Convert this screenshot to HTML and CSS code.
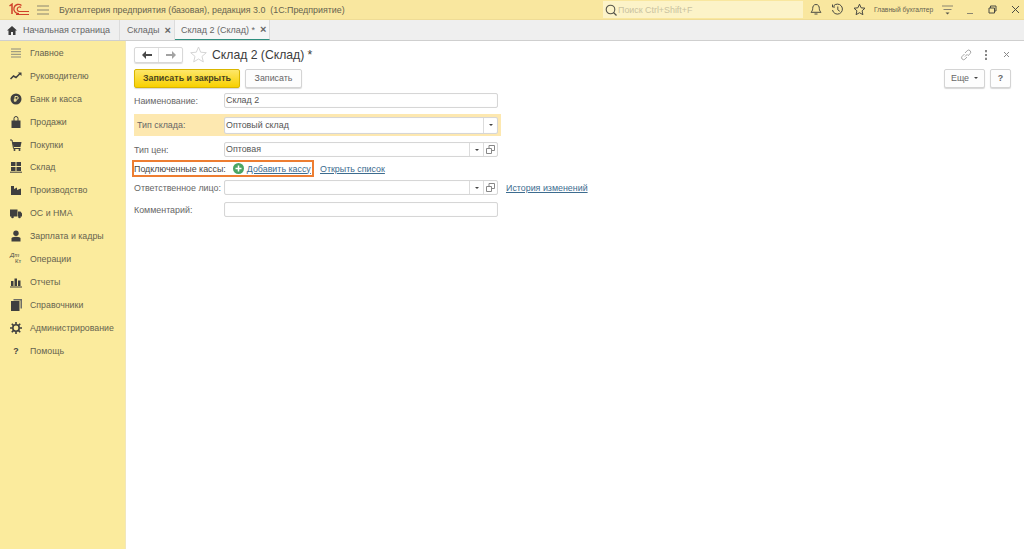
FILE: index.html
```html
<!DOCTYPE html>
<html lang="ru">
<head>
<meta charset="utf-8">
<title>Склад 2 (Склад) *</title>
<link rel="stylesheet" href="styles.css">
</head>
<body>
<header class="topbar">
  <svg class="logo" width="20" height="13" viewBox="0 0 20 13"><path d="M.5 3L3 1.200V11" fill="none" stroke="#d0402a" stroke-width="1.500"/><path d="M12.500 2.500A4.600 4.600 0 1 0 10 10.500" fill="none" stroke="#d0402a" stroke-width="1.300"/><path d="M12 4.500a2.300 2.300 0 1 0-2 4h10M7 11.500h13" fill="none" stroke="#d0402a" stroke-width="1.200"/></svg>
  <svg class="burger" width="12" height="10" viewBox="0 0 12 10"><path d="M0 1h12M0 5h12M0 9h12" stroke="#8a8570" stroke-width="1"/></svg>
  <div class="apptitle">Бухгалтерия предприятия (базовая), редакция 3.0&nbsp; (1С:Предприятие)</div>
  <div class="search">
    <svg width="12" height="12" viewBox="0 0 12 12"><circle cx="5.500" cy="5.500" r="4.300" fill="none" stroke="#55544a" stroke-width="1.100"/><path d="M8.500 8.500l3 3" stroke="#55544a" stroke-width="1.200"/></svg>
    <span>Поиск Ctrl+Shift+F</span>
  </div>
  <div class="tools">
    <svg width="12" height="13" viewBox="0 0 12 13"><path d="M6 1.500c2.500 0 3.300 2 3.300 4 0 2 1 3 1.700 3.800H1c.7-.8 1.700-1.800 1.700-3.800s.8-4 3.300-4zM4.500 11h3" fill="none" stroke="#4a4a42" stroke-width="1"/></svg>
    <svg width="13" height="13" viewBox="0 0 13 13"><path d="M2.500 3A5 5 0 1 1 1.500 7M1.500 1.500V4h2.500M6.800 3.500v3.300l2 1.500" fill="none" stroke="#4a4a42" stroke-width="1"/></svg>
    <svg width="13" height="13" viewBox="0 0 13 13"><path d="M6.500 1.200l1.600 3.600 3.900.4-2.900 2.600.8 3.900-3.400-2-3.400 2 .8-3.900L1 5.200l3.900-.4z" fill="none" stroke="#4a4a42" stroke-width="1"/></svg>
    <span class="user">Главный бухгалтер</span>
    <svg width="11" height="10" viewBox="0 0 11 10"><path d="M0 1h11M1.500 4.500h8" stroke="#8a8570"/><path d="M3.500 7.500h4l-2 2z" fill="#55544a"/></svg>
    <svg class="win-min" width="7" height="10" viewBox="0 0 7 10"><path d="M0 8.500h6" stroke="#8a8570"/></svg>
    <svg class="win-max" width="9" height="9" viewBox="0 0 9 9"><path d="M1 3h5.500v5H1zM2.500 3V1H8v5H6.500" fill="none" stroke="#4a4a42"/></svg>
    <svg class="win-close" width="9" height="9" viewBox="0 0 9 9"><path d="M1 1l7 7M8 1l-7 7" stroke="#4a4a42"/></svg>
  </div>
</header>

<nav class="tabs">
  <div class="tab tab-home">
    <svg width="10" height="9" viewBox="0 0 10 9"><path d="M5 0L0 4.500h1.500V9h2.500V6h2v3h2.500V4.500H10z" fill="#3d3d3d"/></svg>
    <span>Начальная страница</span>
  </div>
  <div class="tab tab-list"><span>Склады</span><span class="tab-x">×</span></div>
  <div class="tab tab-active"><span>Склад 2 (Склад) *</span><span class="tab-x">×</span></div>
</nav>

<div class="main">
  <aside class="sidebar">
    <div class="navitem"><svg width="12" height="12" viewBox="0 0 12 12"><path d="M1 2h10M1 4.700h10M1 7.300h10M1 10h10" stroke="#8b8b7c" stroke-width="1"/></svg><span>Главное</span></div>
    <div class="navitem"><svg width="12" height="12" viewBox="0 0 12 12"><path d="M.5 9l3-3 2.500 1.500 4-4" fill="none" stroke="#3f3f3f" stroke-width="1.500"/><path d="M8 2.500h3.500V6z" fill="#3f3f3f"/></svg><span>Руководителю</span></div>
    <div class="navitem"><svg width="12" height="12" viewBox="0 0 12 12"><circle cx="6" cy="6" r="5.500" fill="#3f3f3f"/><path d="M5 9V3.500h1.800a1.400 1.400 0 0 1 0 2.800H3.800M3.800 7.700h3" fill="none" stroke="#fbec9e" stroke-width="1"/></svg><span>Банк и касса</span></div>
    <div class="navitem"><svg width="12" height="12" viewBox="0 0 12 12"><path d="M1.500 4.500h9V12h-9z" fill="#3f3f3f"/><path d="M4 5V2.500a2 2 0 0 1 4 0V5" fill="none" stroke="#3f3f3f"/></svg><span>Продажи</span></div>
    <div class="navitem"><svg width="12" height="12" viewBox="0 0 12 12"><path d="M2.500 3h9L10.500 8H3.500z" fill="#3f3f3f"/><path d="M0 1h2l1.500 8.500h7" fill="none" stroke="#3f3f3f"/><circle cx="4.500" cy="11" r="1" fill="#3f3f3f"/><circle cx="9.500" cy="11" r="1" fill="#3f3f3f"/></svg><span>Покупки</span></div>
    <div class="navitem"><svg width="12" height="12" viewBox="0 0 12 12"><path d="M1 1h4.500v4H1zM6.500 1H11v4H6.500zM1 6h4.500v4H1zM6.500 6H11v4H6.500z" fill="#3f3f3f"/><path d="M0 11.200h12" stroke="#3f3f3f"/></svg><span>Склад</span></div>
    <div class="navitem"><svg width="12" height="12" viewBox="0 0 12 12"><path d="M1 11V2h3v3l3-1.500V6l4-1.500V11z" fill="#3f3f3f"/></svg><span>Производство</span></div>
    <div class="navitem"><svg width="12" height="12" viewBox="0 0 12 12"><path d="M0 2.500h7.500V9.500H0zM8 4.500h2.500L12 6.500v3H8z" fill="#3f3f3f"/><circle cx="2.500" cy="10" r="1.300" fill="#3f3f3f"/><circle cx="9.500" cy="10" r="1.300" fill="#3f3f3f"/></svg><span>ОС и НМА</span></div>
    <div class="navitem"><svg width="12" height="12" viewBox="0 0 12 12"><circle cx="6" cy="3.200" r="2.700" fill="#3f3f3f"/><path d="M1.500 11.500V8.500c0-1 1.500-1.700 4.500-1.700s4.500.7 4.500 1.700v3z" fill="#3f3f3f"/></svg><span>Зарплата и кадры</span></div>
    <div class="navitem"><span class="dtkt"><i>Дт</i><b>Кт</b></span><span>Операции</span></div>
    <div class="navitem"><svg width="12" height="12" viewBox="0 0 12 12"><path d="M1 5h2.500v5H1zM4.500 2.500H7V10H4.500zM8 4.500h2.500V10H8zM0 11h12" fill="#3f3f3f"/><path d="M0 11h12" stroke="#3f3f3f"/></svg><span>Отчеты</span></div>
    <div class="navitem"><svg width="12" height="12" viewBox="0 0 12 12"><path d="M3.500 0H12v9.500h-1.500V1.500h-7z" fill="#6d6d66"/><path d="M1 2h8.500v10H1z" fill="#3f3f3f"/></svg><span>Справочники</span></div>
    <div class="navitem"><svg width="12" height="12" viewBox="0 0 12 12"><circle cx="6" cy="6" r="3.200" fill="none" stroke="#3f3f3f" stroke-width="1.600"/><path d="M6 0v2.500M6 9.500V12M0 6h2.500M9.500 6H12M1.800 1.800l1.800 1.800M8.400 8.400l1.800 1.800M1.800 10.200l1.800-1.800M8.400 3.600l1.800-1.800" stroke="#3f3f3f" stroke-width="1.600"/></svg><span>Администрирование</span></div>
    <div class="navitem"><span class="qmark">?</span><span>Помощь</span></div>
  </aside>

  <main class="content">
    <div class="form-head">
      <div class="navpair">
        <span class="np"><svg width="10" height="8" viewBox="0 0 10 8"><path d="M4 0v3h6v2H4v3L0 4z" fill="#4a4a4a"/></svg></span>
        <span class="np np-off"><svg width="10" height="8" viewBox="0 0 10 8"><path d="M6 0v3H0v2h6v3l4-4z" fill="#a3a3a3"/></svg></span>
      </div>
      <svg class="fav" width="17" height="17" viewBox="0 0 17 17"><path d="M8.500 1l2.200 5.200 5.600.5-4.300 3.700 1.300 5.500-4.800-2.900-4.800 2.900 1.300-5.500L.7 6.700l5.600-.5z" fill="none" stroke="#d5d5d5" stroke-width="1"/></svg>
      <h1 class="form-title">Склад 2 (Склад) *</h1>
      <div class="head-tools">
        <svg class="ht-link" width="12" height="12" viewBox="0 0 12 12"><path d="M5 7.500l2.500-2.500M4.500 5L2 7.500a2 2 0 0 0 2.800 2.800L7 8M5 4l2.200-2.300a2 2 0 0 1 2.900 2.900L7.800 7" fill="none" stroke="#9a9a9a" stroke-width=".9"/></svg>
        <svg width="4" height="10" viewBox="0 0 4 10"><path d="M2 0v2.200M2 3.900v2.200M2 7.800V10" stroke="#6a6a6a" stroke-width="1.600"/></svg>
        <svg width="7" height="7" viewBox="0 0 7 7"><path d="M1 1l5 5M6 1L1 6" stroke="#8a8a8a"/></svg>
      </div>
    </div>

    <div class="cmdbar">
      <button class="btn btn-primary">Записать и закрыть</button>
      <button class="btn btn-plain">Записать</button>
      <div class="cmd-right">
        <button class="btn btn-more">Еще <span class="caret"></span></button>
        <button class="btn btn-help">?</button>
      </div>
    </div>

    <div class="form">
      <div class="row row-name">
        <label class="lbl">Наименование:</label>
        <div class="field"><span class="val">Склад 2</span></div>
      </div>
      <div class="row row-hl">
        <label class="lbl">Тип склада:</label>
        <div class="field field-hl"><span class="val">Оптовый склад</span><span class="cell"><span class="caret"></span></span></div>
      </div>
      <div class="row row-price">
        <label class="lbl">Тип цен:</label>
        <div class="field"><span class="val">Оптовая</span><span class="cell"><span class="caret"></span></span><span class="cell"><svg width="9" height="9" viewBox="0 0 9 9"><path d="M.5 3.500h5v5h-5zM3 3.500V.5h5.500v5H5.500" fill="none" stroke="#888"/></svg></span></div>
      </div>
      <div class="row row-kass">
        <div class="marked">
          <span class="plain">Подключенные кассы:</span>
          <svg width="11" height="11" viewBox="0 0 11 11"><circle cx="5.500" cy="5.500" r="5.500" fill="#4aa564"/><path d="M5.500 2.500v6M2.500 5.500h6" stroke="#fff" stroke-width="1.500"/></svg>
          <a class="link">Добавить кассу</a>
        </div>
        <a class="link link-list">Открыть список</a>
      </div>
      <div class="row row-resp">
        <label class="lbl">Ответственное лицо:</label>
        <div class="field"><span class="val"></span><span class="cell"><span class="caret"></span></span><span class="cell"><svg width="9" height="9" viewBox="0 0 9 9"><path d="M.5 3.500h5v5h-5zM3 3.500V.5h5.500v5H5.500" fill="none" stroke="#888"/></svg></span></div>
        <a class="link link-hist">История изменений</a>
      </div>
      <div class="row row-comm">
        <label class="lbl">Комментарий:</label>
        <div class="field"><span class="val"></span></div>
      </div>
    </div>
  </main>
</div>
</body>
</html>
```
FILE: styles.css
```css
* { box-sizing: border-box; }
html, body { margin: 0; height: 100%; overflow: hidden; }
body {
  width: 1024px; height: 549px;
  font-family: "Liberation Sans", Arial, sans-serif;
  font-size: 9px; color: #4a4a4a; background: #fff;
  display: flex; flex-direction: column;
}
.topbar {
  height: 20px; flex: none; display: flex; align-items: center;
  background: #f9e79f; border-bottom: 1px solid #efdc96;
}
.logo { margin-left: 9px; flex: none; }
.burger { margin-left: 8px; flex: none; }
.apptitle { margin-left: 10px; width: 544px; font-size: 8.9px; color: #66634f; white-space: nowrap; }
.search {
  width: 200px; height: 17px; background: #fcf3c8; display: flex; align-items: center;
  gap: 1px; padding-left: 2px; color: #c9c2a0; font-size: 8.9px; flex: none;
}
.tools { flex: 1; display: flex; align-items: center; padding-left: 7px; }
.tools svg { flex: none; }
.tools svg:nth-child(2) { margin-left: 9px; }
.tools svg:nth-child(3) { margin-left: 9px; }
.user { margin-left: 8px; font-size: 6.7px; color: #66634f; white-space: nowrap; }
.tools svg:nth-child(5) { margin-left: 9px; }
.tools .win-min { margin-left: 14px; }
.tools .win-max { margin-left: 14px; }
.tools .win-close { margin-left: 14px; }

.tabs {
  height: 21px; flex: none; display: flex; background: #efefef; border-bottom: 1px solid #cfcfcf;
  font-size: 9px; color: #666;
}
.tab { display: flex; align-items: center; height: 20px; border-right: 1px solid #dcdcdc; white-space: nowrap; }
.tab-home { width: 120px; padding-left: 7px; gap: 6px; }
.tab-list { width: 55px; padding-left: 7px; gap: 5px; }
.tab-active { width: 95px; padding-left: 6px; gap: 5px; background: #f6f6f6; border-bottom: 1px solid #2f8f7f; height: 20px; }
.tab-x { font-size: 11px; font-weight: bold; color: #666; line-height: 1; }

.main { flex: 1; display: flex; min-height: 0; }
.sidebar {
  width: 126px; flex: none; background: #fbeb9d; border-right: 1px solid #f2e7bb;
  padding-top: 0.5px;
}
.navitem { height: 22.9px; display: flex; align-items: center; padding-left: 10px; gap: 8px; font-size: 8.8px; color: #66634f; white-space: nowrap; }
.navitem svg, .dtkt, .qmark { width: 12px; flex: none; }
.dtkt { display: flex; flex-direction: column; font-size: 6px; line-height: 5.5px; color: #444; }
.dtkt i { font-style: italic; }
.dtkt b { font-weight: normal; margin-left: 5px; }
.qmark { text-align: center; font-weight: bold; color: #444; }

.content { flex: 1; padding: 5px 8px 0 8px; min-width: 0; }
.form-head { display: flex; align-items: center; height: 17px; }
.navpair { display: flex; width: 49px; height: 16px; border: 1px solid #d8d8d8; border-radius: 2px; box-shadow: 0 1px 1px #ddd; }
.np { flex: 1; display: flex; align-items: center; justify-content: center; }
.np + .np { border-left: 1px solid #e2e2e2; }
.fav { margin-left: 7px; }
.form-title { margin: 0 0 0 5px; font-size: 12.2px; font-weight: normal; color: #3c3c3c; }
.head-tools { margin-left: auto; display: flex; align-items: center; gap: 15px; padding-right: 6px; }
.ht-link { margin-right: -3px; }

.cmdbar { display: flex; align-items: center; margin-top: 5px; height: 20px; }
.btn {
  font: inherit; font-size: 8.9px; height: 19px; border: 1px solid #d4d4d4; border-radius: 2px;
  background: #fdfdfd; color: #666; box-shadow: 0 1px 1px #d8d8d8; padding: 0; display: flex; align-items: center; justify-content: center;
}
.btn-primary { width: 106px; background: linear-gradient(#fde76a, #f8d000); border-color: #d9b600; color: #4a4420; font-weight: bold; font-size: 8.9px; }
.btn-plain { width: 57px; margin-left: 5px; }
.cmd-right { margin-left: auto; display: flex; gap: 5px; padding-right: 5px; }
.btn-more { width: 41px; gap: 5px; }
.btn-help { width: 21px; font-weight: bold; }
.caret { width: 0; height: 0; border-left: 2px solid transparent; border-right: 2px solid transparent; border-top: 2.5px solid #444; display: inline-block; }

.form { margin-top: 5px; }
.row { display: flex; align-items: center; font-size: 8.9px; color: #666; }
.lbl { width: 90px; flex: none; white-space: nowrap; }
.field { width: 274px; height: 15px; flex: none; display: flex; border: 1px solid #d6d6d6; border-radius: 2px; background: #fff; box-shadow: inset 0 0 1px #e5e5e5; }
.val { flex: 1; padding: 0 1px; line-height: 13px; font-size: 8.9px; color: #555; }
.cell { width: 14px; flex: none; border-left: 1px solid #dcdcdc; display: flex; align-items: center; justify-content: center; }
.row-name { height: 15px; }
.row-hl { height: 22px; margin-top: 6px; width: 367px; background: #fde8b0; padding-left: 3px; }
.row-hl .lbl { width: 87px; }
.field-hl { height: 17px; }
.field-hl .val { line-height: 15px; }
.row-price { height: 15px; margin-top: 6px; }
.row-kass { height: 17px; margin-top: 3px; margin-left: -2px; }
.marked { height: 17px; width: 182px; flex: none; border: 2px solid #ed7d31; display: flex; align-items: center; padding-left: 0; color: #444; white-space: nowrap; }
.marked svg { margin-left: 7px; flex: none; }
.marked .link { margin-left: 3px; }
.link { color: #3d6c8f; text-decoration: underline; font-size: 8.9px; white-space: nowrap; }
.link-list { margin-left: 6px; }
.link-hist { margin-left: 8px; }
.row-resp { height: 15px; margin-top: 3px; }
.row-comm { height: 15px; margin-top: 7px; }
```
